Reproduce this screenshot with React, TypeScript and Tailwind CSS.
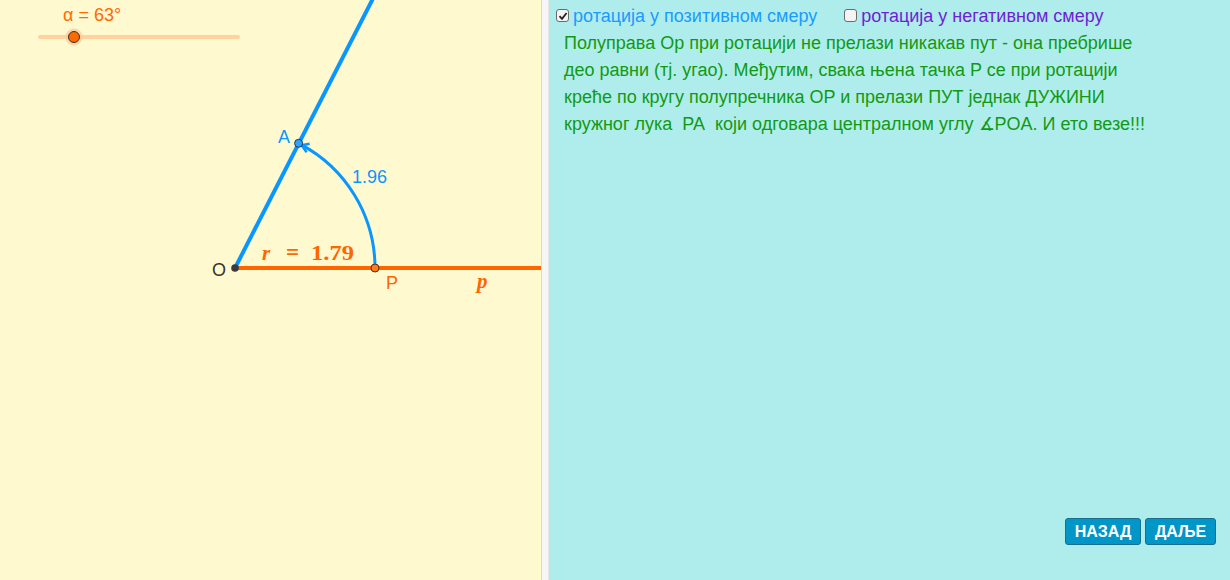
import React from "react";

const Check = ({ checked }: { checked: boolean }) => (
  <span className="inline-flex items-center justify-center w-[13px] h-[13px] rounded-[3px] border border-[#6b6b6b] bg-[#f4f4f4] shrink-0">
    {checked && (
      <svg width="10" height="10" viewBox="0 0 10 10">
        <path d="M1.5 5.2 L4 7.8 L8.6 2" fill="none" stroke="#222" strokeWidth="1.8" />
      </svg>
    )}
  </span>
);

export default function App() {
  const O = { x: 235, y: 268 };
  const A = { x: 298.6, y: 143.3 };
  const P = { x: 375, y: 268 };
  const sans = "Liberation Sans, Arial, sans-serif";
  const serif = "Liberation Serif, 'Times New Roman', serif";
  return (
    <div className="flex w-[1230px] h-[580px] overflow-hidden font-['Liberation_Sans',Arial,sans-serif]">
      <div className="w-[541px] h-full bg-[#fff9cf] shrink-0 relative">
        <svg width="541" height="580" className="block">
          {/* slider */}
          <line x1="40" y1="37" x2="238" y2="37" stroke="#ffd29f" strokeWidth="4" strokeLinecap="round" />
          <circle cx="74" cy="37" r="8.5" fill="#ffcc99" opacity="0.8" />
          <circle cx="74" cy="37" r="5.5" fill="#ff6a00" stroke="#333" strokeWidth="1" />
          <text x="63" y="21" fontSize="18" fill="#ff6a00" fontFamily={sans}>α = 63°</text>

          {/* ray p */}
          <line x1={O.x} y1={O.y} x2="541" y2={O.y} stroke="#ff6600" strokeWidth="4" />
          {/* ray OA */}
          <line x1={O.x} y1={O.y} x2={O.x + 273 * 64 / 125} y2={-5} stroke="#0a96ff" strokeWidth="4" />
          {/* arc */}
          <path d={`M ${P.x} ${P.y - 2} A 140 140 0 0 0 ${A.x + 2} ${A.y + 1}`} fill="none" stroke="#0a96ff" strokeWidth="3" />
          <path d={`M ${A.x + 11} ${A.y + 0.5} L ${A.x + 3} ${A.y + 2} L ${A.x + 8} ${A.y + 9}`} fill="none" stroke="#0a96ff" strokeWidth="2.5" strokeLinejoin="round" />

          {/* points */}
          <circle cx={O.x} cy={O.y} r="3.8" fill="#3a3a3a" />
          <circle cx={A.x} cy={A.y} r="4" fill="#2ea3ff" stroke="#1c3b5a" strokeWidth="1" />
          <circle cx={P.x} cy={P.y} r="4" fill="#ff7a1a" stroke="#5a2a10" strokeWidth="1" />

          {/* labels */}
          <text x="278" y="143" fontSize="18" fill="#0a96ff" fontFamily={sans}>A</text>
          <text x="352" y="183" fontSize="18" fill="#0a96ff" fontFamily={sans}>1.96</text>
          <text x="212" y="276" fontSize="18" fill="#333" fontFamily={sans}>O</text>
          <text x="386" y="289" fontSize="18" fill="#ff6600" fontFamily={sans}>P</text>
          <text x="262" y="260" fontSize="21" fill="#ff6600" fontWeight="bold" fontStyle="italic" fontFamily={serif}>r</text>
          <text x="286" y="260" fontSize="23" fill="#ff6600" fontWeight="bold" fontFamily={serif}>=</text>
          <text x="311" y="260" fontSize="21" fill="#ff6600" fontWeight="bold" fontFamily={serif} textLength="43" lengthAdjust="spacingAndGlyphs">1.79</text>
          <text x="477" y="288" fontSize="21" fill="#ff6600" fontWeight="bold" fontStyle="italic" fontFamily={serif}>p</text>
        </svg>
      </div>
      <div className="w-[8px] h-full bg-[#f6f6f6] border-l border-[#d9d9d9] border-r border-r-[#e6e6e6] shrink-0" />
      <div className="flex-1 h-full bg-[#afeded] flex flex-col">
        <div className="flex items-center pl-[7px] pt-[7px] h-[24px] text-[18px] leading-[18px]">
          <Check checked />
          <span className="ml-[4px] text-[#1a9bff]">ротација у позитивном смеру</span>
          <span className="ml-[27px]"><Check checked={false} /></span>
          <span className="ml-[4px] text-[#6f1fd6]">ротација у негативном смеру</span>
        </div>
        <div className="pl-[15px] pt-[6px] text-[18px] leading-[27px] text-[#119a11]">
          <div>Полуправа Ор при ротацији не прелази никакав пут - она пребрише</div>
          <div>део равни (тј. угао). Међутим, свака њена тачка P се при ротацији</div>
          <div>креће по кругу полупречника OP и прелази ПУТ једнак ДУЖИНИ</div>
          <div>кружног лука&nbsp; PA&nbsp; који одговара централном углу ∡POA. И ето везе!!!</div>
        </div>
        <div className="mt-auto flex justify-end gap-[4px] pr-[14px] pb-[35px]">
          <button className="h-[27px] w-[76px] bg-[#0096c8] border border-[#1a6f8f] rounded-[3px] text-white font-bold text-[16px] leading-none">НАЗАД</button>
          <button className="h-[27px] w-[71px] bg-[#0096c8] border border-[#1a6f8f] rounded-[3px] text-white font-bold text-[16px] leading-none">ДАЉЕ</button>
        </div>
      </div>
    </div>
  );
}
